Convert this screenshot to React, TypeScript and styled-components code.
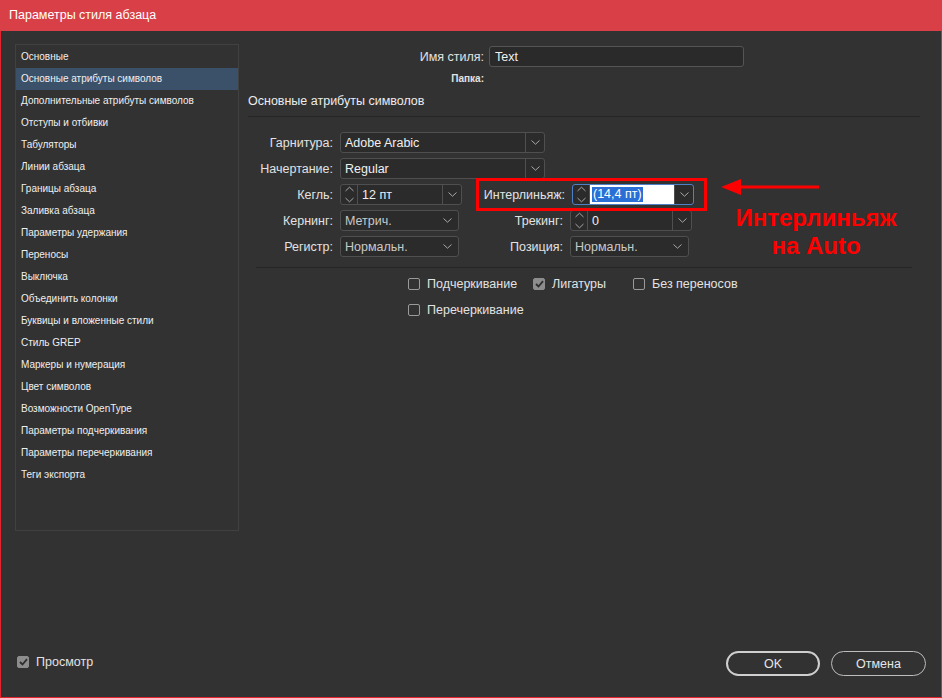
import React from "react";
import styled, { createGlobalStyle } from "styled-components";

const Global = createGlobalStyle`
  html, body { margin: 0; padding: 0; background: #323232; }
  body { font-family: "Liberation Sans", Arial, sans-serif; color: #e2e2e2; }
  * { box-sizing: border-box; }
`;

const Window = styled.div`
  position: relative;
  width: 942px;
  height: 698px;
  background: #323232;
  border: 1px solid #e3262d;
  border-top: none;
  display: flex;
  flex-direction: column;
`;

const TitleBar = styled.div`
  height: 31px;
  margin: 0 -1px;
  background: #d93f47;
  color: #fff;
  font-size: 12.5px;
  display: flex;
  align-items: center;
  padding-left: 9px;
  padding-bottom: 1px;
`;

const Body = styled.div`
  display: grid;
  grid-template-columns: 224px 1fr;
  column-gap: 9px;
  padding: 13px 0 0 14px;
`;

const Sidebar = styled.div`
  height: 487px;
  border: 1px solid #414141;
  padding-top: 1px;
  display: flex;
  flex-direction: column;
`;

const SideItem = styled.div<{ $active?: boolean }>`
  height: 22px;
  line-height: 22px;
  padding-left: 5px;
  font-size: 10px;
  color: #efefef;
  background: ${(p) => (p.$active ? "#3b516a" : "transparent")};
  white-space: nowrap;
`;

const Main = styled.div`
  display: flex;
  flex-direction: column;
  padding-right: 21px;
`;

const NameGrid = styled.div`
  display: grid;
  grid-template-columns: 236px 255px;
  column-gap: 5px;
  row-gap: 6px;
  align-items: center;
  padding-top: 2px;
`;

const RightLabel = styled.div<{ $small?: boolean }>`
  text-align: right;
  font-size: ${(p) => (p.$small ? "10px" : "12.5px")};
  font-weight: ${(p) => (p.$small ? "bold" : "normal")};
  color: #e2e2e2;
  white-space: nowrap;
`;

const TextInput = styled.div`
  height: 21px;
  border: 1px solid #555;
  border-radius: 3px;
  background: #2a2a2a;
  font-size: 12.5px;
  color: #f0f0f0;
  display: flex;
  align-items: center;
  padding-left: 5px;
`;

const SectionTitle = styled.div`
  font-size: 12.5px;
  color: #ececec;
  margin-top: 10px;
  height: 16px;
`;

const Divider = styled.div<{ $inset?: number; $top?: number }>`
  height: 1px;
  background: #262626;
  margin-top: ${(p) => p.$top ?? 0}px;
  margin-left: ${(p) => p.$inset ?? 0}px;
  margin-right: ${(p) => p.$inset ?? 0}px;
`;

const FormGrid = styled.div`
  display: grid;
  grid-template-columns: 85px 122px 94px 122px;
  grid-auto-rows: 21px;
  column-gap: 7px;
  row-gap: 5px;
  align-items: center;
  margin-top: 15px;
  margin-bottom: 10px;
`;

const Field = styled.div<{ $width?: number; $span?: number; $focus?: boolean }>`
  grid-column: ${(p) => (p.$span ? `span ${p.$span}` : "auto")};
  width: ${(p) => (p.$width ? `${p.$width}px` : "100%")};
  height: 21px;
  border: 1px solid ${(p) => (p.$focus ? "#4f7fc4" : "#4f4f4f")};
  border-radius: 3px;
  background: #2b2b2b;
  display: flex;
  align-items: stretch;
  overflow: hidden;
`;

const FieldText = styled.div<{ $dim?: boolean; $white?: boolean }>`
  flex: 1;
  font-size: 12.5px;
  color: ${(p) => (p.$dim ? "#c9c9c9" : "#f0f0f0")};
  background: ${(p) => (p.$white ? "#ffffff" : "transparent")};
  display: flex;
  align-items: center;
  padding-left: ${(p) => (p.$white ? "2px" : "4px")};
  white-space: nowrap;
`;

const Selected = styled.span`
  background: #2a6fd6;
  color: #fff;
  padding: 0 1px;
  line-height: 15px;
`;

const Segment = styled.div<{ $w: number; $left?: boolean; $right?: boolean }>`
  width: ${(p) => p.$w}px;
  flex: none;
  display: flex;
  align-items: center;
  justify-content: center;
  border-left: ${(p) => (p.$left ? "1px solid #4f4f4f" : "none")};
  border-right: ${(p) => (p.$right ? "1px solid #4f4f4f" : "none")};
`;

const HighlightGroup = styled.div`
  grid-column: span 2;
  position: relative;
  display: grid;
  grid-template-columns: 96px 122px;
  column-gap: 7px;
  align-items: center;
  &::after {
    content: "";
    position: absolute;
    top: -6px;
    bottom: -6px;
    left: 7px;
    right: -15px;
    border: 3px solid #ff0000;
    pointer-events: none;
  }
`;

const CheckGrid = styled.div`
  display: grid;
  grid-template-columns: 125px 100px 140px;
  grid-auto-rows: 16px;
  row-gap: 10px;
  margin-top: 8px;
  margin-left: 160px;
`;

const CheckRow = styled.label`
  display: flex;
  align-items: center;
  gap: 7px;
  font-size: 12.5px;
  color: #e2e2e2;
  white-space: nowrap;
`;

const Box = styled.span<{ $checked?: boolean }>`
  width: 12px;
  height: 12px;
  border-radius: 2px;
  border: 1px solid ${(p) => (p.$checked ? "#8d8d8d" : "#9a9a9a")};
  background: ${(p) => (p.$checked ? "#8d8d8d" : "transparent")};
  display: flex;
  align-items: center;
  justify-content: center;
  flex: none;
`;

const Footer = styled.div`
  margin-top: auto;
  display: flex;
  align-items: center;
  justify-content: space-between;
  padding: 0 15px 21px 16px;
`;

const Buttons = styled.div`
  display: flex;
  gap: 11px;
  padding-top: 4px;
`;

const Button = styled.button<{ $primary?: boolean }>`
  width: ${(p) => (p.$primary ? "94px" : "95px")};
  height: 25px;
  border-radius: 13px;
  border: ${(p) => (p.$primary ? "2px solid #cfcfcf" : "1px solid #bdbdbd")};
  background: transparent;
  color: #e6e6e6;
  font-family: "Liberation Sans", Arial, sans-serif;
  font-size: 12.5px;
  padding: 0;
`;

const Annotation = styled.div`
  position: absolute;
  left: 718px;
  top: 178px;
  width: 200px;
  display: flex;
  flex-direction: column;
  align-items: center;
`;

const ArrowSvg = styled.svg`
  align-self: flex-start;
`;

const AnnoText = styled.div`
  margin-top: 8px;
  margin-left: -6px;
  font-family: "Liberation Sans", Arial, sans-serif;
  font-weight: bold;
  font-size: 24px;
  line-height: 28px;
  color: #ff0000;
  text-align: center;
  width: 200px;
`;

const Chevron = () => (
  <svg width="9" height="5" viewBox="0 0 9 5">
    <path d="M0.5 0.5 L4.5 4.2 L8.5 0.5" stroke="#a8a8a8" strokeWidth="1" fill="none" />
  </svg>
);

const Spin = () => (
  <svg width="9" height="17" viewBox="0 0 9 17">
    <path d="M0.5 5 L4.5 1.2 L8.5 5" stroke="#a8a8a8" strokeWidth="1" fill="none" />
    <path d="M0.5 12 L4.5 15.8 L8.5 12" stroke="#a8a8a8" strokeWidth="1" fill="none" />
  </svg>
);

const Check = ({ color }: { color: string }) => (
  <svg width="9" height="8" viewBox="0 0 9 8">
    <path d="M1 4 L3.5 6.5 L8 1.2" stroke={color} strokeWidth="1.8" fill="none" />
  </svg>
);

const Combo = ({ text, width }: { text: string; width: number }) => (
  <Field $span={2} $width={width}>
    <FieldText>{text}</FieldText>
    <Segment $w={19} $left>
      <Chevron />
    </Segment>
  </Field>
);

const SelectBox = ({ text }: { text: string }) => (
  <Field $width={119}>
    <FieldText $dim>{text}</FieldText>
    <Segment $w={22}>
      <Chevron />
    </Segment>
  </Field>
);

const SpinField = ({ children, focus, white }: { children: React.ReactNode; focus?: boolean; white?: boolean }) => (
  <Field $focus={focus}>
    <Segment $w={17} $right>
      <Spin />
    </Segment>
    <FieldText $white={white}>{children}</FieldText>
    <Segment $w={19} $left>
      <Chevron />
    </Segment>
  </Field>
);

const CheckItem = ({ label, checked }: { label: string; checked?: boolean }) => (
  <CheckRow>
    <Box $checked={checked}>{checked && <Check color="#2e2e2e" />}</Box>
    {label}
  </CheckRow>
);

const sideItems = [
  "Основные",
  "Основные атрибуты символов",
  "Дополнительные атрибуты символов",
  "Отступы и отбивки",
  "Табуляторы",
  "Линии абзаца",
  "Границы абзаца",
  "Заливка абзаца",
  "Параметры удержания",
  "Переносы",
  "Выключка",
  "Объединить колонки",
  "Буквицы и вложенные стили",
  "Стиль GREP",
  "Маркеры и нумерация",
  "Цвет символов",
  "Возможности OpenType",
  "Параметры подчеркивания",
  "Параметры перечеркивания",
  "Теги экспорта",
];

export default function App() {
  return (
    <>
      <Global />
      <Window>
        <TitleBar>Параметры стиля абзаца</TitleBar>
        <Body>
          <Sidebar>
            {sideItems.map((s, i) => (
              <SideItem key={s} $active={i === 1}>
                {s}
              </SideItem>
            ))}
          </Sidebar>
          <Main>
            <NameGrid>
              <RightLabel>Имя стиля:</RightLabel>
              <TextInput>Text</TextInput>
              <RightLabel $small>Папка:</RightLabel>
              <div />
            </NameGrid>
            <SectionTitle>Основные атрибуты символов</SectionTitle>
            <Divider $top={6} />
            <FormGrid>
              <RightLabel>Гарнитура:</RightLabel>
              <Combo text="Adobe Arabic" width={205} />
              <div />

              <RightLabel>Начертание:</RightLabel>
              <Combo text="Regular" width={205} />
              <div />

              <RightLabel>Кегль:</RightLabel>
              <SpinField>12 пт</SpinField>
              <HighlightGroup>
                <RightLabel>Интерлиньяж:</RightLabel>
                <SpinField focus white>
                  <Selected>(14,4 пт)</Selected>
                </SpinField>
              </HighlightGroup>

              <RightLabel>Кернинг:</RightLabel>
              <SelectBox text="Метрич." />
              <RightLabel>Трекинг:</RightLabel>
              <SpinField>0</SpinField>

              <RightLabel>Регистр:</RightLabel>
              <SelectBox text="Нормальн." />
              <RightLabel>Позиция:</RightLabel>
              <SelectBox text="Нормальн." />
            </FormGrid>
            <Divider $inset={8} />
            <CheckGrid>
              <CheckItem label="Подчеркивание" />
              <CheckItem label="Лигатуры" checked />
              <CheckItem label="Без переносов" />
              <CheckItem label="Перечеркивание" />
            </CheckGrid>
          </Main>
        </Body>
        <Footer>
          <CheckItem label="Просмотр" checked />
          <Buttons>
            <Button $primary>OK</Button>
            <Button>Отмена</Button>
          </Buttons>
        </Footer>
        <Annotation>
          <ArrowSvg width="102" height="18" viewBox="0 0 102 18">
            <polygon points="2,9 22,1 22,17" fill="#ff0000" />
            <rect x="20" y="7.5" width="80" height="3" fill="#ff0000" />
          </ArrowSvg>
          <AnnoText>
            Интерлиньяж
            <br />
            на Auto
          </AnnoText>
        </Annotation>
      </Window>
    </>
  );
}
